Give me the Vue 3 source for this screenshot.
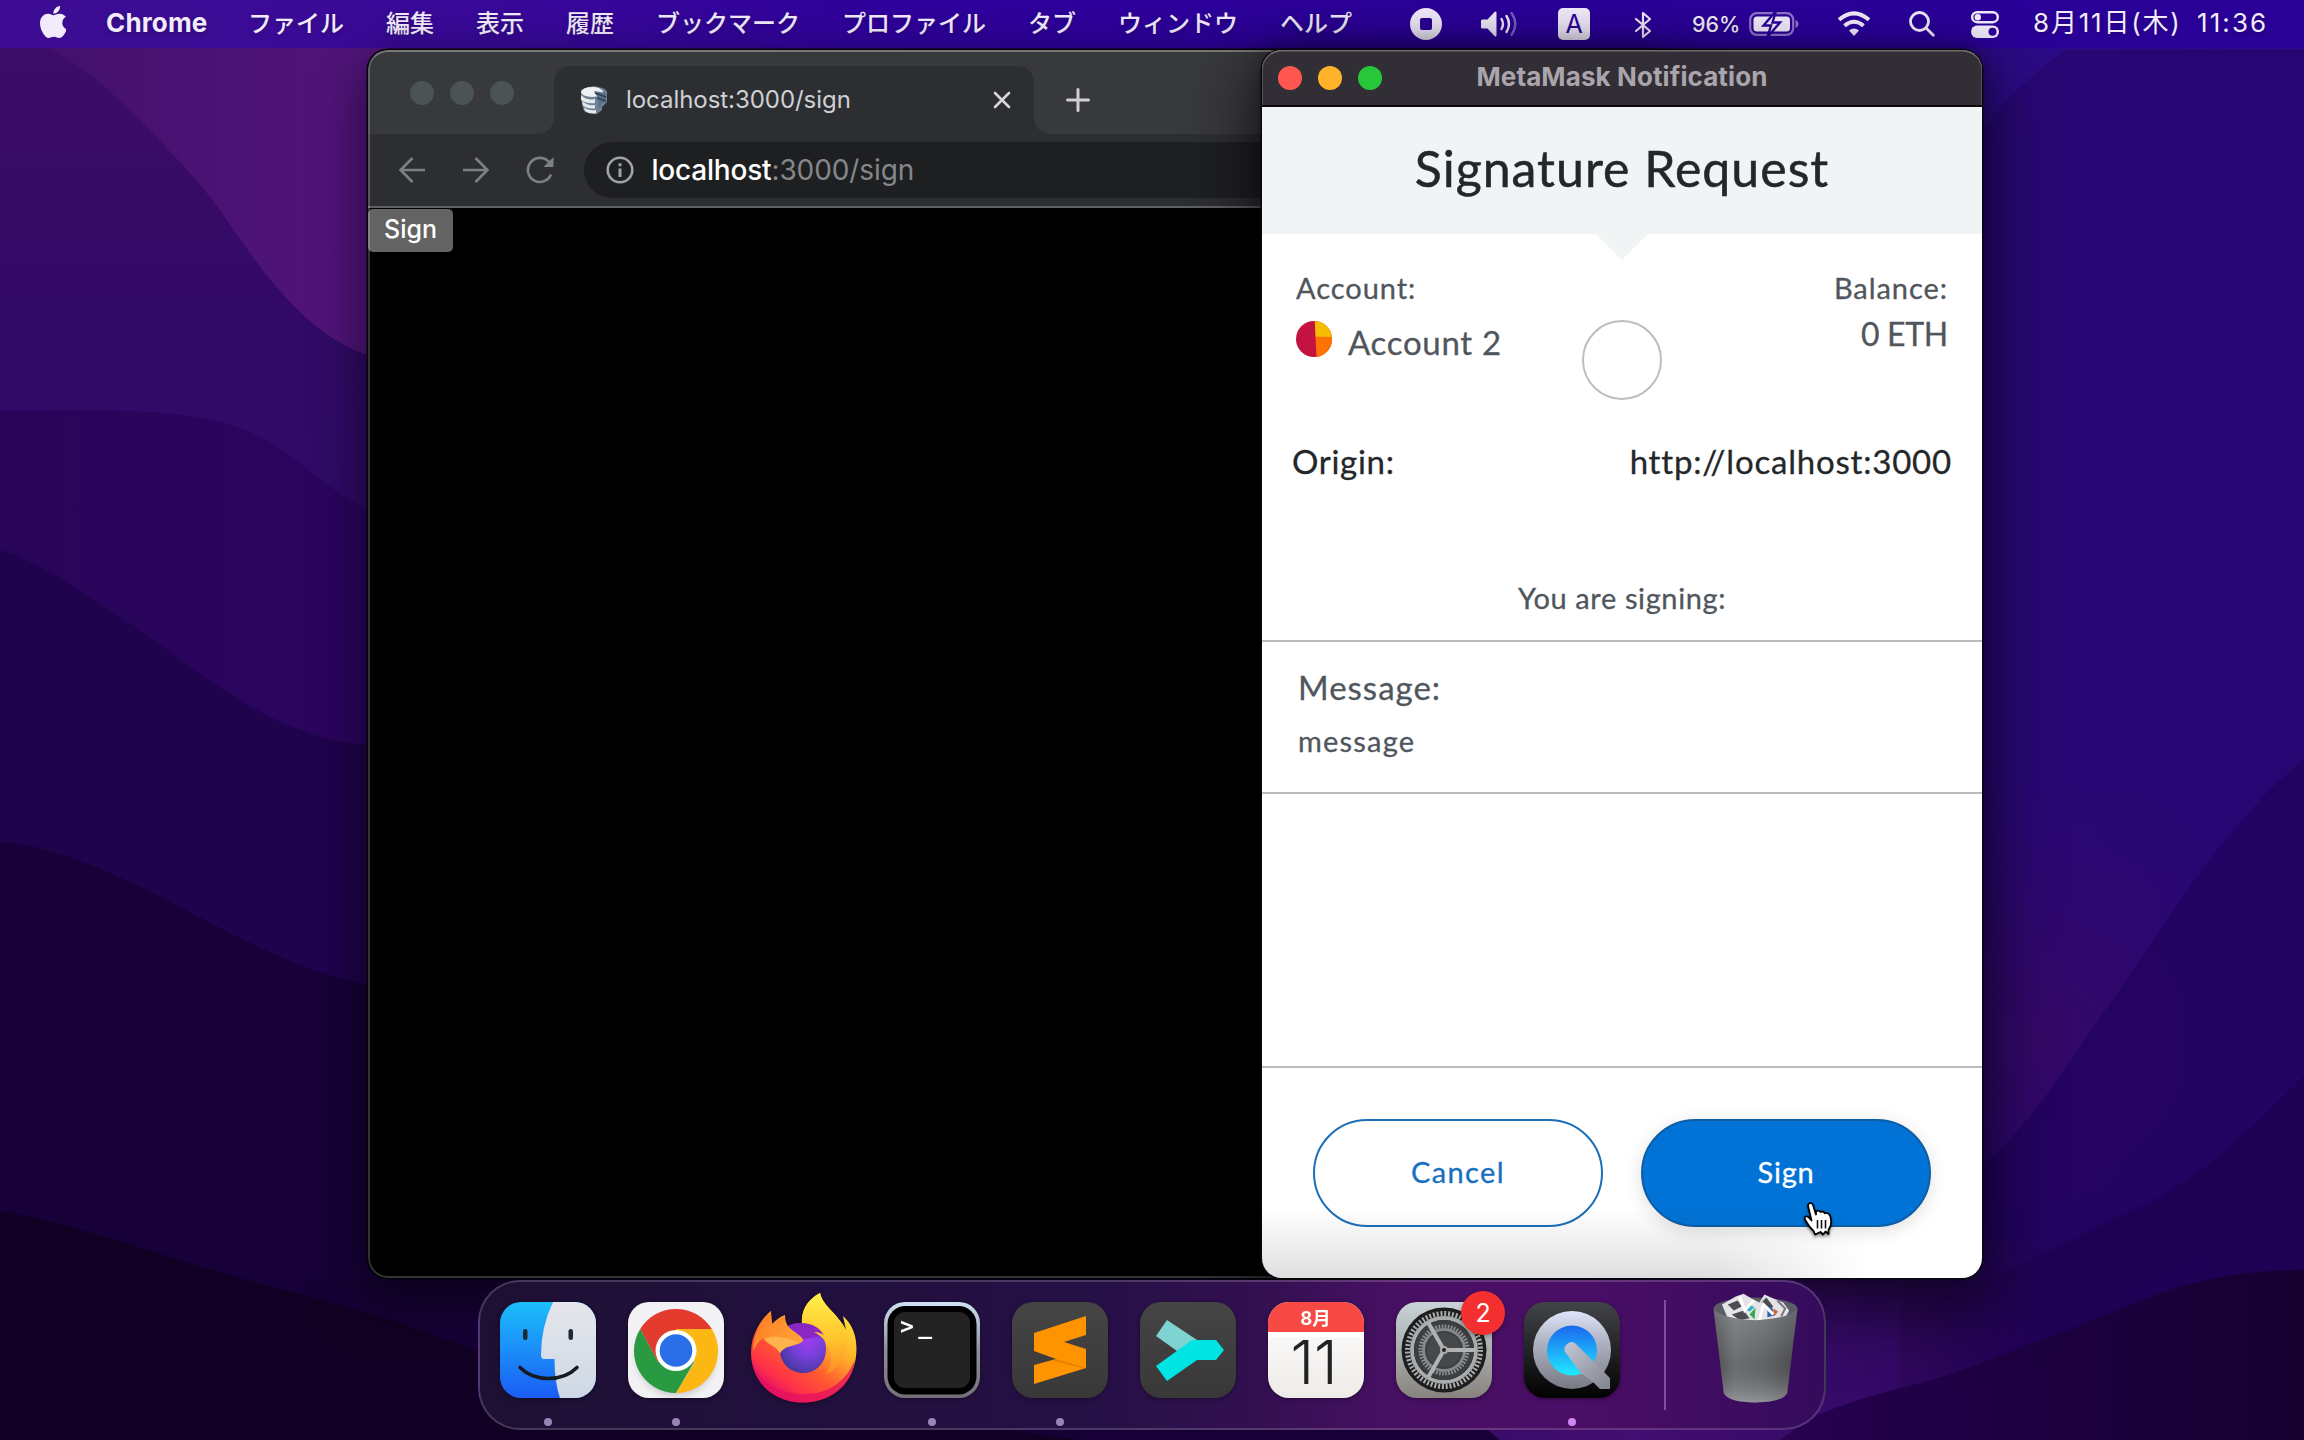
<script setup>
const menus = ['ファイル', '編集', '表示', '履歴', 'ブックマーク', 'プロファイル', 'タブ', 'ウィンドウ', 'ヘルプ']
</script>

<template>
  <div class="desktop">
    <svg class="wallpaper" viewBox="0 0 2304 1440" preserveAspectRatio="none">
      <defs>
        <linearGradient id="w0" x1="0" y1="0" x2="1" y2="0">
          <stop offset="0" stop-color="#42106a" /><stop offset=".16" stop-color="#52147c" /><stop offset=".5" stop-color="#300a90" /><stop offset="1" stop-color="#2a0a88" />
        </linearGradient>
        <linearGradient id="w1" x1="0" y1="0" x2="0" y2="600" gradientUnits="userSpaceOnUse">
          <stop offset="0" stop-color="#3e0e68" /><stop offset=".5" stop-color="#320a66" /><stop offset="1" stop-color="#2e0b68" />
        </linearGradient>
        <linearGradient id="w2" x1="0" y1="0" x2="400" y2="0" gradientUnits="userSpaceOnUse">
          <stop offset="0" stop-color="#29055a" /><stop offset="1" stop-color="#2b045f" />
        </linearGradient>
        <linearGradient id="wr" x1="1900" y1="0" x2="2304" y2="0" gradientUnits="userSpaceOnUse">
          <stop offset="0" stop-color="#290876" /><stop offset="1" stop-color="#270572" />
        </linearGradient>
        <radialGradient id="wp" cx="2040" cy="1040" r="260" gradientUnits="userSpaceOnUse">
          <stop offset="0" stop-color="#360864" stop-opacity=".85" /><stop offset="1" stop-color="#33086a" stop-opacity="0" />
        </radialGradient>
        <linearGradient id="wb" x1="1300" y1="0" x2="2120" y2="0" gradientUnits="userSpaceOnUse">
          <stop offset="0" stop-color="#2d0b57" stop-opacity=".8" /><stop offset=".4" stop-color="#4a0f70" stop-opacity=".8" /><stop offset=".75" stop-color="#35095e" stop-opacity=".7" /><stop offset="1" stop-color="#1f0152" stop-opacity="0" />
        </linearGradient>
        <linearGradient id="wd" x1="1500" y1="0" x2="2304" y2="0" gradientUnits="userSpaceOnUse">
          <stop offset="0" stop-color="#420d68" /><stop offset=".45" stop-color="#22004a" /><stop offset="1" stop-color="#150030" />
        </linearGradient>
      </defs>
      <rect width="2304" height="1440" fill="url(#w0)" />
      <path d="M0 40 L50 49 C85 66 115 95 147 127 C175 157 200 182 220 210 C258 266 305 335 368 355 L1200 500 V1440 H0 Z" fill="url(#w1)" />
      <path d="M0 410 C60 412 185 402 250 432 C300 455 325 490 368 509 L1200 800 V1440 H0 Z" fill="url(#w2)" />
      <path d="M0 549 C45 565 90 597 133 625 C195 668 270 738 368 745 L1200 900 V1440 H0 Z" fill="#1f034d" />
      <path d="M0 842 C75 847 155 895 230 933 C280 958 320 975 368 985 L1200 1200 V1440 H0 Z" fill="#170138" />
      <path d="M1100 49 H2304 V1440 H1100 Z" fill="url(#wr)" />
      <path d="M1900 49 H2067 C2030 75 1995 110 1975 140 L1900 200 Z" fill="#2c0b86" />
      <rect x="1700" y="700" width="604" height="700" fill="url(#wp)" />
      <path d="M2304 759 C2250 805 2215 850 2167 919 C2140 960 2120 990 2100 1018 C2060 1075 2030 1125 1983 1165 L1900 1220 V1440 H2304 Z" fill="#22035f" opacity=".82" />
      <path d="M2304 1076 C2230 1150 2190 1185 2133 1210 C2060 1245 2000 1280 1900 1310 V1440 H2304 Z" fill="#1d0150" opacity=".8" />
      <rect x="1100" y="1240" width="1020" height="200" fill="url(#wb)" />
      <path d="M2304 1270 C2180 1270 2130 1310 2067 1330 C2000 1355 1950 1378 1900 1388 C1870 1396 1840 1405 1810 1418 L1780 1440 H2304 Z" fill="url(#wd)" />
      <path d="M300 1278 H1400 C1440 1350 1460 1410 1500 1440 H300 Z" fill="#160035" />
      <path d="M0 1211 C80 1225 160 1256 240 1278 C340 1305 400 1320 475 1350 C600 1390 800 1400 1080 1440 H0 Z" fill="#110023" />
    </svg>

    <header class="menubar">
      <svg class="apple" viewBox="4 32 366 448" preserveAspectRatio="none"><path fill="#f1ebfb" d="M318.700 268.700c-.2-36.700 16.400-64.400 50-84.800-18.800-26.900-47.200-41.700-84.700-44.600-35.500-2.800-74.300 20.700-88.500 20.700-15 0-49.400-19.700-76.400-19.700C63.300 141.200 4 184.800 4 273.500q0 39.300 14.400 81.200c12.800 36.700 59 126.700 107.200 125.200 25.200-.6 43-17.900 75.800-17.900 31.800 0 48.300 17.900 76.400 17.900 48.600-.7 90.400-82.500 102.600-119.300-65.200-30.700-61.700-90-61.700-91.900zm-56.600-164.200c27.300-32.400 24.800-61.900 24-72.500-24.100 1.400-52 16.400-67.900 34.900-17.500 19.800-27.800 44.300-25.600 71.900 26.100 2 49.900-11.400 69.500-34.300z" /></svg>
      <span class="app">Chrome</span>
      <nav class="menus">
        <span v-for="m in menus" :key="m">{{ m }}</span>
      </nav>
      <div class="status">
        <svg class="rec" viewBox="0 0 32 32"><path fill="#f1ebfb" fill-rule="evenodd" d="M16 0a16 16 0 1 0 0 32a16 16 0 0 0 0-32zM12 10h8a2 2 0 0 1 2 2v8a2 2 0 0 1-2 2h-8a2 2 0 0 1-2-2v-8a2 2 0 0 1 2-2z" /></svg>
        <svg class="vol" viewBox="0 0 38 28" fill="none" stroke="#f1ebfb" stroke-width="2.400" stroke-linecap="round">
          <path d="M1.500 9.500h5l7-7.500q2-1.500 2 .8v22.400q0 2.300-2 .8l-7-7.500h-5q-1.500 0-1.500-1.500v-6q0-1.500 1.500-1.500z" fill="#f1ebfb" stroke="none" />
          <path d="M20.500 9q3 5 0 10" /><path d="M25.500 6q5 8 0 16" /><path d="M30.500 3q7.500 11 0 22" opacity=".4" />
        </svg>
        <span class="ime">A</span>
        <svg class="bt" viewBox="0 0 18 28" fill="none" stroke="#f1ebfb" stroke-width="2.200" stroke-linejoin="round" stroke-linecap="round"><path d="M2 8l14 12-7 6V2l7 6L2 20" /></svg>
        <span class="pct">96%</span>
        <svg class="bat" viewBox="0 0 50 26">
          <rect x="1.200" y="2.200" width="43" height="21.600" rx="6.500" fill="none" stroke="#f1ebfb" stroke-opacity=".5" stroke-width="2.200" />
          <rect x="4.500" y="5.500" width="36.500" height="15" rx="3.500" fill="#f1ebfb" />
          <path d="M46.500 9v8q3-1.200 3-4t-3-4z" fill="#f1ebfb" fill-opacity=".5" />
          <path d="M27 0L14.500 14.500h7.500L18.500 26L31 11.500h-7.500z" fill="#f1ebfb" stroke="#2d0299" stroke-width="2.400" />
        </svg>
        <svg class="wifi" viewBox="0 0 34 25">
          <path d="M17 25l-5-5.500q5-4 10 0z" fill="#f1ebfb" />
          <path d="M7.500 14.800q9.500-8 19 0M2 8.800q15-13 30 0" fill="none" stroke="#f1ebfb" stroke-width="4" />
        </svg>
        <svg class="find" viewBox="0 0 26 26" fill="none" stroke="#f1ebfb" stroke-width="2.800" stroke-linecap="round"><circle cx="10.500" cy="10.500" r="9" /><path d="M17.300 17.300l7 7" /></svg>
        <svg class="cc" viewBox="0 0 28 27">
          <rect x="1.200" y="1.200" width="25.600" height="10" rx="5" fill="none" stroke="#f1ebfb" stroke-width="2.400" /><circle cx="6.800" cy="6.200" r="3.200" fill="#f1ebfb" />
          <rect x="0" y="14.500" width="28" height="12.500" rx="6.200" fill="#f1ebfb" /><circle cx="21.500" cy="20.700" r="4" fill="#2b0199" />
        </svg>
        <span class="date">8月11日(木)</span>
        <span class="time">11:36</span>
      </div>
    </header>

    <section class="browser">
      <div class="tabstrip">
        <div class="dots"><i></i><i></i><i></i></div>
        <div class="tab">
          <svg class="fav" viewBox="0 0 28 28">
            <path d="M1 6q0-4 13-6q13 2 13 6v10l-5 5v3l-5 4q-10 0-13-3l-2-6z" fill="#6f8196" />
            <ellipse cx="12" cy="6" rx="11" ry="5" fill="#eef0f2" />
            <path d="M1 9q6 6 14 4v4q-8 1-14-3zM2 15q5 5 13 4v3.500q-8 .5-12-3zM4 21q4 4 12 3v3.500q-7 .5-11-2.500z" fill="#e6e9ec" />
            <path d="M14 5l12 2v9l-4 1-3 6-1-11z" fill="#5b7189" />
            <path d="M15 7l11 4M17 12l9 3" stroke="#2f4053" stroke-width="1.500" />
          </svg>
          <span class="tabtitle">localhost:3000/sign</span>
          <svg class="close" viewBox="0 0 18 18" stroke="#d5d7da" stroke-width="2.600" stroke-linecap="round"><path d="M2 2l14 14M16 2L2 16" /></svg>
        </div>
        <svg class="plus" viewBox="0 0 24 24" stroke="#d0d1d4" stroke-width="3" stroke-linecap="round"><path d="M12 1.500v21M1.500 12h21" /></svg>
      </div>
      <div class="toolbar">
        <svg viewBox="0 0 28 28" fill="none" stroke="#7d7f83" stroke-width="2.600"><path d="M27 14H3M14.500 2L2.500 14l12 12" /></svg>
        <svg viewBox="0 0 28 28" fill="none" stroke="#7d7f83" stroke-width="2.600"><path d="M1 14h24M13.500 2l12 12-12 12" /></svg>
        <svg viewBox="0 0 28 28" fill="none" stroke="#7d7f83" stroke-width="2.600"><path d="M25 18.500A12 12 0 1 1 22.500 5.500L25 8.500" /><path d="M27.500 1v10h-10z" fill="#7d7f83" stroke="none" /></svg>
        <div class="url">
          <svg viewBox="0 0 28 28" fill="none" stroke="#a0a2a6" stroke-width="2.600"><circle cx="14" cy="14" r="12.300" /><path d="M14 12.500v8.500M14 7.200v3" stroke-width="3" /></svg>
          <span class="addr"><b>localhost</b><span>:3000/sign</span></span>
        </div>
      </div>
      <div class="page"><button class="pagebtn">Sign</button></div>
    </section>

    <section class="notif">
      <div class="titlebar">
        <div class="lights"><i class="r"></i><i class="y"></i><i class="g"></i></div>
        <span class="wtitle">MetaMask Notification</span>
      </div>
      <div class="nbody">
        <div class="head"><h1>Signature Request</h1></div>
        <div class="acct">
          <div>
            <div class="sm">Account:</div>
            <div class="who">
              <svg viewBox="0 0 36 36"><circle cx="18" cy="18" r="18" fill="#c41340" /><path d="M18.800 0A18 18 0 0 1 36 16H19.500z" fill="#f5be00" /><path d="M36 16A18 18 0 0 1 20.500 36L19.500 15.500z" fill="#fc7303" /></svg>
              <span>Account 2</span>
            </div>
          </div>
          <div class="ring"></div>
          <div class="bal">
            <div class="sm">Balance:</div>
            <div class="md eth">0 ETH</div>
          </div>
        </div>
        <div class="origin"><span>Origin:</span><span class="site">http://localhost:3000</span></div>
        <div class="signing">You are signing:</div>
        <div class="msg">
          <div class="md">Message:</div>
          <div class="sm">message</div>
        </div>
        <div class="foot">
          <button class="btn cancel">Cancel</button>
          <button class="btn sign">Sign</button>
        </div>
        <div class="shade"></div>
      </div>
      <svg class="cursor" viewBox="0 0 32 36"><path d="M7.500 2.200C9 1.500 10.500 2.300 11 4L14 13.500V10.500Q16.500 8.500 18.500 11Q21 9.500 22.800 12.300Q26 11 28 14.500Q30 20 28.500 25L26.500 29V33L23.500 30.500L21 33.500L18.500 31L13 33.500L11.500 30Q7 26 3.500 19.500Q1.500 15.800 4 15.300Q6.500 15 9.500 19.500L6 5Q5.800 3 7.500 2.200Z" fill="#fff" stroke="#000" stroke-width="1.800" stroke-linejoin="round" /><path d="M15.500 19v8.500M19.500 19v8.500M23.500 19v8.500" stroke="#111" stroke-width="1.600" /></svg>
    </section>

    <footer class="dock">
      <div class="slot run">
        <svg viewBox="0 0 96 96">
          <defs>
            <linearGradient id="f1" x2="0" y2="1"><stop offset="0" stop-color="#1bbffb" /><stop offset="1" stop-color="#1b5cf4" /></linearGradient>
            <linearGradient id="f2" x2="0" y2="1"><stop offset="0" stop-color="#e6e6ec" /><stop offset="1" stop-color="#cdd8e4" /></linearGradient>
            <clipPath id="fc"><rect width="96" height="96" rx="21" /></clipPath>
          </defs>
          <g clip-path="url(#fc)">
            <rect width="96" height="96" fill="url(#f1)" />
            <path d="M53 0Q41 25 41 53Q41 57 44 57H54.500Q54.500 80 60 96H96V0Z" fill="url(#f2)" />
          </g>
          <rect x="23" y="27" width="4.500" height="11" rx="2.200" fill="#1d2a33" /><rect x="68.500" y="27" width="4.500" height="11" rx="2.200" fill="#1d2a33" />
          <path d="M20 65.500Q31 76.500 48.500 76.500T77 65.500" fill="none" stroke="#141a22" stroke-width="3.600" stroke-linecap="round" />
        </svg>
      </div>
      <div class="slot run">
        <svg viewBox="0 0 96 96">
          <rect width="96" height="96" rx="21" fill="#f2f1f4" />
          <circle class="soft" cx="48" cy="54" r="40" fill="#000" opacity=".16" />
          <path d="M12.200 27A42 42 0 0 1 83.800 27L48 28V49L30 60Z" fill="#e33b2e" />
          <path d="M12.200 27A42 42 0 0 0 48 91L66 60L48 49L30 60Z" fill="#299a41" />
          <path d="M83.800 27A42 42 0 0 1 48 91L67 60L48 49V27Z" fill="#fcb712" />
          <circle cx="48" cy="48.500" r="20.500" fill="#fff" /><circle cx="48" cy="48.500" r="16.300" fill="#2a6fe8" />
        </svg>
      </div>
      <div class="slot">
        <svg class="fox" viewBox="0 0 106 110">
          <defs>
            <linearGradient id="x1" x1=".85" y1=".1" x2=".25" y2=".95"><stop offset="0" stop-color="#ffe93a" /><stop offset=".35" stop-color="#ffb028" /><stop offset=".62" stop-color="#ff5a30" /><stop offset=".85" stop-color="#ff3148" /><stop offset="1" stop-color="#e3106a" /></linearGradient>
            <radialGradient id="x2" cx=".62" cy=".35" r=".7"><stop offset="0" stop-color="#a23bf0" /><stop offset=".5" stop-color="#7440d8" /><stop offset="1" stop-color="#46379f" /></radialGradient>
            <linearGradient id="x3" x2="0" y2="1"><stop offset="0" stop-color="#fff04a" /><stop offset=".55" stop-color="#ffc52c" /><stop offset="1" stop-color="#ff8a28" /></linearGradient>
            <linearGradient id="x4" x2="1" y2=".6"><stop offset="0" stop-color="#ff7a22" /><stop offset="1" stop-color="#ffa436" /></linearGradient>
          </defs>
          <path d="M20 18C9 27 0 42 0 60C0 90 24 109.500 52 109.500C82 109.500 105.500 88 105.500 56C105.500 42 101 31 92 23L95 37C90 24 72 14 69 0C54 8 50 20 51 32L34 38V22C28 24 24 28 21 31Z" fill="url(#x1)" />
          <path d="M1 66C6 90 30 101 54 101C78 101 96 88 104 66C102 92 80 109.500 52 109.500C25 109.500 3 92 1 66Z" fill="#e5105f" opacity=".75" />
          <path d="M37 33C50 26 74 30 75 56C75 70 65 80 52 80C39 80 29 70 29 57C29 45 33 38 37 33Z" fill="url(#x2)" />
          <path d="M37 33C46 28 66 28 73 43L52 46Z" fill="#8a27c4" />
          <path d="M51 32C50 18 55 8 69 0C72 14 88 20 94 38C99 56 90 75 74 82C86 68 80 48 63 39C68 39 72 41 75 44C72 35 62 30 51 30Z" fill="url(#x3)" />
          <path d="M20 18C20 24 20 28 22 32C27 27 31 24 34 22C34 27 35 30 37 33C41 38 48 41 52 46C53 49 48 51 44 52C36 54 31 55 29 60C27 56 24 55 24 50C20 50 15 48 13 45C7 47 5 54 2 58C3 40 10 27 20 18Z" fill="url(#x4)" />
          <path d="M13 46C22 42 30 44 38 46L48 50C40 53 34 53 29 60C24 52 17 52 13 46Z" fill="#ffb34d" />
        </svg>
      </div>
      <div class="slot run">
        <svg viewBox="0 0 96 96">
          <defs><linearGradient id="t1" x2="0" y2="1"><stop offset="0" stop-color="#cfe2f4" /><stop offset=".5" stop-color="#8c8f99" /><stop offset="1" stop-color="#757078" /></linearGradient></defs>
          <rect width="96" height="96" rx="21" fill="url(#t1)" /><rect x="3.500" y="4" width="89" height="88.500" rx="18" fill="#000" /><rect x="10" y="10" width="76" height="76" rx="11" fill="#232323" />
          <text x="16" y="32" font-family="DejaVu Sans Mono" font-weight="700" font-size="23" fill="#fff" textLength="32">&gt;_</text>
        </svg>
      </div>
      <div class="slot run">
        <svg viewBox="0 0 96 96">
          <defs><linearGradient id="s1" x2="0" y2="1"><stop offset="0" stop-color="#454545" /><stop offset="1" stop-color="#383838" /></linearGradient></defs>
          <rect width="96" height="96" rx="21" fill="url(#s1)" />
          <path d="M22 31L74 14V33L52 40L74 47V66L22 82V63L44 57L22 49Z" fill="#ff9400" /><path d="M44 57L74 66L72 66.500L58 63L40 58Z" fill="#d97a00" opacity=".7" />
        </svg>
      </div>
      <div class="slot">
        <svg viewBox="0 0 96 96">
          <rect width="96" height="96" rx="21" fill="url(#s1)" />
          <path d="M27 18L57 38L37 49L16 34Z" fill="#7fd3d1" /><path d="M16 64L52 38H76L84 48L76 58H57L27 79Z" fill="#00e4e4" />
        </svg>
      </div>
      <div class="slot">
        <svg viewBox="0 0 96 96">
          <defs><linearGradient id="c1" x2="0" y2="1"><stop offset="0" stop-color="#ffffff" /><stop offset="1" stop-color="#eeebe8" /></linearGradient></defs>
          <rect width="96" height="96" rx="21" fill="url(#c1)" /><path d="M0 34V21A21 21 0 0 1 21 0H75A21 21 0 0 1 96 21V34Z" fill="#f74a45" /><rect y="30" width="96" height="5" fill="#fff" />
          <text x="47.500" y="23" text-anchor="middle" font-family="Inter, 'Noto Sans CJK JP'" font-weight="700" font-size="18.500" fill="#fff">8月</text>
          <text x="46" y="82" text-anchor="middle" font-family="Inter" font-weight="300" font-size="60" fill="#222">11</text>
        </svg>
      </div>
      <div class="slot">
        <svg viewBox="0 0 96 96">
          <defs><linearGradient id="g1" x2="0" y2="1"><stop offset="0" stop-color="#c8d4d8" /><stop offset=".6" stop-color="#a5a5a4" /><stop offset="1" stop-color="#87827d" /></linearGradient></defs>
          <rect width="96" height="96" rx="21" fill="url(#g1)" />
          <circle cx="48" cy="48" r="42.500" fill="#1c1d1e" />
          <g fill="none" stroke="#a9abac">
            <circle cx="48" cy="48" r="36.500" stroke-width="5" stroke-dasharray="2 1.822" /><circle cx="48" cy="48" r="32" stroke-width="4" />
            <circle cx="48" cy="48" r="30" fill="#3c3e40" stroke="none" />
            <circle cx="48" cy="48" r="23.500" stroke="#8f9294" stroke-width="4" stroke-dasharray="1.600 1.476" /><circle cx="48" cy="48" r="20.500" stroke="#85888a" stroke-width="3" />
            <circle cx="48" cy="48" r="17" fill="#46484a" stroke="none" />
            <path d="M48 48H79M48 48L32.500 21.200M48 48L32.500 74.800" stroke-width="4" stroke="#b0b2b3" />
          </g>
          <circle cx="48" cy="48" r="4" fill="#a9abac" /><circle cx="48" cy="48" r="2" fill="#222" />
        </svg>
        <span class="badge">2</span>
      </div>
      <div class="slot run hot">
        <svg viewBox="0 0 96 96">
          <defs>
            <linearGradient id="q1" x2="0" y2="1"><stop offset="0" stop-color="#434448" /><stop offset="1" stop-color="#020203" /></linearGradient>
            <linearGradient id="q2" x2="0" y2="1"><stop offset="0" stop-color="#dfe6fb" /><stop offset=".4" stop-color="#aeb2c2" /><stop offset="1" stop-color="#777a83" /></linearGradient>
            <linearGradient id="q3" x2="0" y2="1"><stop offset="0" stop-color="#1b68f0" /><stop offset="1" stop-color="#1feaff" /></linearGradient>
            <linearGradient id="q4" x1="0" y1="0" x2="1" y2="1"><stop offset="0" stop-color="#c3c7d6" /><stop offset="1" stop-color="#82858e" /></linearGradient>
          </defs>
          <rect width="96" height="96" rx="21" fill="url(#q1)" />
          <circle cx="48" cy="48" r="39" fill="url(#q2)" /><circle cx="48" cy="48.500" r="25" fill="url(#q3)" />
          <path d="M41 50Q39 46 43 42Q48 38 52 42L80 70L86 76V87H76L70 81L57 71Z" fill="url(#q4)" />
        </svg>
      </div>
      <div class="sep"></div>
      <svg class="trash" viewBox="0 0 88 112">
        <defs>
          <linearGradient id="b1" x2="1" y2="0"><stop offset="0" stop-color="#56585d" /><stop offset=".25" stop-color="#7d8084" /><stop offset=".6" stop-color="#707377" /><stop offset="1" stop-color="#505257" /></linearGradient>
          <linearGradient id="b2" x2="0" y2="1"><stop offset="0" stop-color="#a0a2a6" stop-opacity=".3" /><stop offset=".6" stop-color="#333" stop-opacity=".25" /><stop offset="1" stop-color="#a5a7a9" stop-opacity=".6" /></linearGradient>
        </defs>
        <ellipse cx="44" cy="16" rx="42.500" ry="11" fill="#5b5c66" />
        <path d="M10 12L24 4L32 1L40 6L48 10L53 2L62 6L72 10L78 18L74 26L46 30L16 26Z" fill="#e4e4e6" />
        <path d="M16 12l10-4 4 6-8 4zM50 10l5-5 7 9-6 4zM20 22l12-4 6 8-10 2z" fill="#4c4c52" />
        <path d="M32 16l6-4 5 3-5 4z" fill="#2fb3c9" /><path d="M38 22l6-7-1 12z" fill="#36a84c" /><path d="M56 14l5 1 2 8-7 2z" fill="#2d5fae" /><path d="M62 16l5 3-4 5z" fill="#c9653a" />
        <path d="M66 8l8 8-4 8" fill="none" stroke="#77777d" stroke-width="2" /><path d="M28 4l5 14 9-10M48 28l4-16 10 10" fill="none" stroke="#fff" stroke-width="3" />
        <path d="M1.500 16Q8 26 44 28Q80 26 86.500 16L76 102Q70 111 44 111Q18 111 12 102Z" fill="url(#b1)" />
        <path d="M1.500 16Q8 26 44 28Q80 26 86.500 16L76 102Q70 111 44 111Q18 111 12 102Z" fill="url(#b2)" />
      </svg>
    </footer>
  </div>
</template>

<style>
html, body { margin: 0; background: #160035; }
</style>
<style scoped>
.desktop { position: relative; width: 2304px; height: 1440px; overflow: hidden; font-family: Inter, 'Noto Sans CJK JP', sans-serif; }
.desktop svg { display: block; flex: none; }
.wallpaper { position: absolute; inset: 0; width: 2304px; height: 1440px; }
.menubar { position: relative; display: flex; height: 48px; align-items: flex-start; padding-left: 40px; color: #f1ebfb; background: linear-gradient(90deg, #3c0d92 0, #39099a 500px, #2f029c 900px, #2b0099 1500px, #2a0298 2304px); text-shadow: 0 2px 5px rgba(0, 0, 0, .25); white-space: nowrap; }
.apple { width: 26px; height: 32px; margin-top: 6px; }
.app { margin-left: 40px; width: 102px; font-size: 26px; font-weight: 700; letter-spacing: .150px; line-height: 46px; }
.menus { display: flex; gap: 42px; margin-left: 40px; font-size: 24px; font-weight: 500; line-height: 47px; }
.status { display: flex; align-items: flex-start; margin-left: auto; padding-right: 36px; }
.rec { width: 32px; height: 32px; margin-top: 8px; }
.vol { width: 38px; height: 28px; margin: 10px 0 0 39px; }
.ime { width: 32px; height: 32px; margin: 8px 0 0 39px; border-radius: 5px; background: #f1ebfb; color: #2b0199; text-align: center; font-size: 25px; line-height: 32px; text-shadow: none; }
.bt { width: 18px; height: 28px; margin: 11px 0 0 44px; }
.pct { width: 49px; margin-left: 40px; font-size: 21.500px; font-weight: 500; line-height: 48px; }
.bat { width: 50px; height: 26px; margin: 11px 0 0 8px; }
.wifi { width: 34px; height: 25px; margin: 11px 0 0 38px; }
.find { width: 26px; height: 26px; margin: 11px 0 0 38px; }
.cc { width: 28px; height: 27px; margin: 11px 0 0 36px; }
.date { width: 147px; margin-left: 34px; font-size: 26px; letter-spacing: 1.800px; line-height: 46px; }
.time { width: 71px; margin-left: 17px; font-size: 26px; letter-spacing: 2.100px; line-height: 46px; }

.browser { position: absolute; left: 368px; top: 50px; width: 1301px; height: 1228px; border-radius: 20px; overflow: hidden; background: #000; box-shadow: 0 0 0 1.500px #050308, 0 16px 50px 6px rgba(0, 0, 0, .5); }
.browser::after { content: ''; position: absolute; inset: 0; border-radius: 20px; border: 2px solid rgba(255, 255, 255, .2); border-top-color: rgba(255, 255, 255, .32); pointer-events: none; }
.tabstrip { display: flex; height: 84px; background: #38393c; }
.dots { display: flex; gap: 16px; margin: 31px 0 0 42px; }
.dots i, .lights i { width: 24px; height: 24px; border-radius: 50%; background: #4c5354; }
.tab { position: relative; display: flex; align-items: center; box-sizing: border-box; width: 480px; height: 68px; margin: 16px 0 0 40px; padding: 0 23px 0 26px; border-radius: 16px 16px 0 0; background: #2d2e32; }
.tab::before, .tab::after { content: ''; position: absolute; bottom: 0; width: 16px; height: 16px; }
.tab::before { left: -16px; background: radial-gradient(circle at 0 0, transparent 15.500px, #2d2e32 16px); }
.tab::after { right: -16px; background: radial-gradient(circle at 100% 0, transparent 15.500px, #2d2e32 16px); }
.fav { width: 28px; height: 28px; }
.tabtitle { margin-left: 18px; font-size: 24px; letter-spacing: -.050px; color: #cfd1d5; line-height: 66px; }
.close { width: 18px; height: 18px; margin-left: auto; }
.plus { width: 24px; height: 24px; margin: 38px 0 0 32px; }
.toolbar { display: flex; align-items: center; height: 72px; padding: 0 0 0 30px; background: #2d2e32; border-bottom: 2px solid #606164; box-sizing: content-box; }
.toolbar > svg { width: 28px; height: 28px; margin-right: 36px; }
.url { display: flex; align-items: center; box-sizing: border-box; width: 1000px; height: 56px; margin-left: -6px; padding-left: 22px; border-radius: 28px; background: #1e1f21; }
.url svg { width: 28px; height: 28px; }
.addr { margin-left: 17.500px; font-size: 28px; letter-spacing: -.100px; line-height: 55px; color: #85878a; white-space: nowrap; }
.addr b { font-weight: 500; letter-spacing: -.200px; color: #fff; }
.page { padding-top: 1px; }
.pagebtn { display: block; width: 85px; height: 43px; padding: 0 0 2px; border: 0; border-radius: 5px; background: #636363; color: #fff; font: 500 25px/39px Inter, sans-serif; }

.notif { position: absolute; left: 1262px; top: 50px; width: 720px; height: 1228px; border-radius: 20px; background: #fff; box-shadow: 0 0 0 1.500px #0b060e, 0 24px 60px 16px rgba(0, 0, 0, .5), 0 0 20px rgba(0, 0, 0, .35); font-family: Lato, sans-serif; }
.titlebar { position: relative; display: flex; justify-content: center; height: 55px; border-radius: 20px 20px 0 0; background: #322e35; border-bottom: 2px solid #0a0809; box-shadow: inset 0 2px 0 -.500px #6e6a71, inset 1px 0 0 #57535a, inset -1px 0 0 #57535a; }
.lights { position: absolute; left: 16px; top: 16px; display: flex; gap: 16px; }
.lights .r { background: #ff5650; } .lights .y { background: #ffb32b; } .lights .g { background: #28c63b; }
.wtitle { font: 700 26px/54px Inter, sans-serif; letter-spacing: .100px; color: #aaa5ad; }
.nbody { position: relative; height: 1171px; overflow: hidden; border-radius: 0 0 20px 20px; -webkit-text-stroke: .300px currentColor; }
.head { position: relative; height: 127px; background: #f0f4f5; text-align: center; }
.head::after { content: ''; position: absolute; left: 334px; top: 127px; border: 26px solid transparent; border-top-color: #f0f4f5; border-bottom: 0; }
h1 { margin: 0; font-size: 50px; font-weight: 400; line-height: 123px; color: #24272a; letter-spacing: 1px; -webkit-text-stroke-width: .500px; }
.acct { display: grid; grid-template-columns: 1fr 80px 1fr; height: 170px; padding: 34px 34px 0 34px; color: #50565c; box-sizing: border-box; }
.sm { font-size: 29px; line-height: 40px; height: 40px; letter-spacing: .950px; }
.md { font-size: 33px; line-height: 44px; height: 44px; letter-spacing: 1px; }
.who { display: flex; align-items: center; margin-top: 12px; font-size: 33px; line-height: 44px; letter-spacing: .700px; }
.who svg { width: 36px; height: 36px; margin: 0 16px 6px 0; }
.ring { box-sizing: border-box; width: 80px; height: 80px; margin: 52px 0 0 -.500px; border: 2px solid #bbbdbf; border-radius: 50%; }
.bal { text-align: right; }
.bal .md { margin-top: 4px; }
.bal .eth { font-size: 32px; letter-spacing: -.300px; }
.origin { display: flex; justify-content: space-between; margin-top: 35px; padding: 0 30px; font-size: 33px; line-height: 44px; height: 44px; letter-spacing: .700px; color: #24272a; }
.site { letter-spacing: .800px; }
.signing { margin-top: 94px; text-align: center; font-size: 29px; line-height: 41px; height: 40px; letter-spacing: .620px; color: #50565c; }
.msg { box-sizing: border-box; height: 154px; margin-top: 23px; padding: 23px 36px 0; border: solid #b9bbbd; border-width: 2px 0; color: #50565c; }
.msg .sm { margin-top: 12px; letter-spacing: 1.200px; }
.foot { display: flex; justify-content: center; gap: 38px; box-sizing: border-box; height: 212px; margin-top: 272px; padding-top: 51px; border-top: 2px solid #b9bbbd; }
.btn { box-sizing: border-box; width: 290px; height: 108px; padding: 0 0 2px; border: 2px solid #1b6fb8; border-radius: 54px; background: transparent; color: #1670bf; font: 400 29px/100px Lato, sans-serif; letter-spacing: 1.400px; -webkit-text-stroke: .300px currentColor; }
.btn.sign { position: relative; background: #0273d6; border-color: #0e5ea6; color: #fff; letter-spacing: .800px; box-shadow: 0 4px 18px rgba(0, 0, 0, .13); }
.shade { position: absolute; left: 0; right: 0; bottom: 0; height: 70px; background: linear-gradient(180deg, transparent, rgba(0, 0, 0, .13)); -webkit-mask-image: linear-gradient(90deg, #000 62%, transparent 84%); mask-image: linear-gradient(90deg, #000 62%, transparent 84%); }
.cursor { position: absolute; left: 540px; top: 1151px; width: 32px; height: 36px; filter: drop-shadow(0 2px 1.500px rgba(0, 0, 0, .45)); }

.dock { position: absolute; left: 478px; top: 1280px; display: flex; box-sizing: border-box; width: 1348px; height: 150px; padding: 20px 0 0 20px; border: 2px solid rgba(255, 255, 255, .17); border-radius: 42px; background: linear-gradient(90deg, #1d1034 0, #22103f 30%, #251045 45%, #32104f 57%, #471063 68%, #4a0e66 82%, #350b5c 100%); }
.slot { position: relative; width: 96px; height: 96px; margin-right: 32px; }
.slot svg { width: 96px; height: 96px; filter: drop-shadow(0 1px 2px rgba(0, 0, 0, .4)); }
.soft { filter: blur(3px); }
.slot .fox { width: 106px; height: 110px; margin: -9px 0 0 -5px; }
.run::after { content: ''; position: absolute; left: 44px; top: 116px; width: 8px; height: 8px; border-radius: 50%; background: #9a84b6; }
.hot::after { background: #cf86f3; }
.badge { position: absolute; left: 65px; top: -11px; width: 44px; height: 44px; border-radius: 50%; background: #f3302f; color: #fff; text-align: center; font-size: 25px; line-height: 44px; box-shadow: 0 2px 4px rgba(0, 0, 0, .3); }
.sep { width: 2px; height: 110px; margin: -2px 0 0 12px; background: #8149a3; }
.trash { width: 87px; height: 112px; margin: -10px 0 0 46px; }
</style>
